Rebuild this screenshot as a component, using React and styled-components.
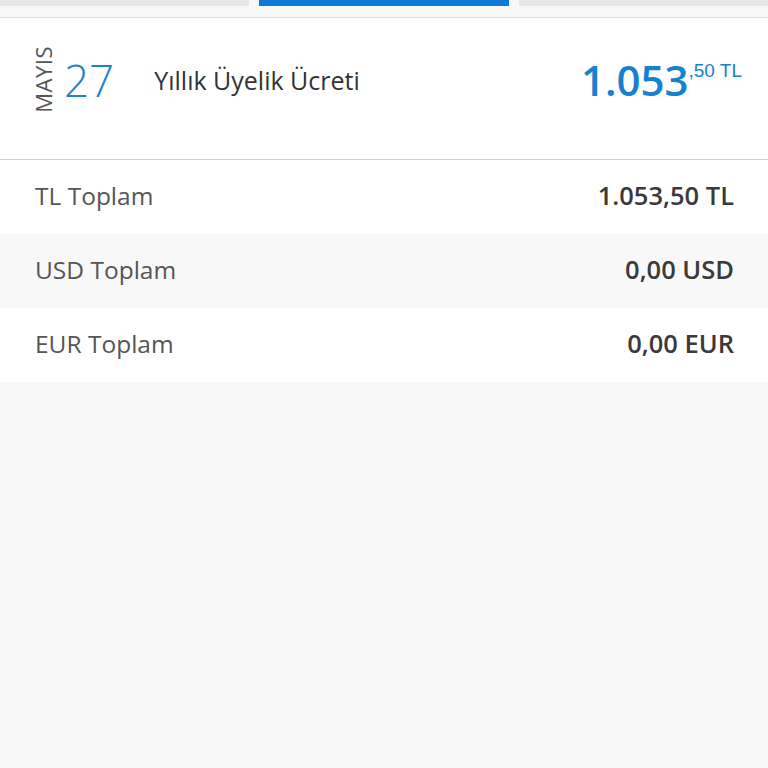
import React from "react";
import styled, { createGlobalStyle } from "styled-components";

const GlobalStyle = createGlobalStyle`
  html, body {
    margin: 0;
    padding: 0;
    background: #f8f8f8;
    font-family: "Open Sans", "Noto Sans", sans-serif;
  }
`;

const totals = [
  { label: "TL Toplam", value: "1.053,50 TL" },
  { label: "USD Toplam", value: "0,00 USD" },
  { label: "EUR Toplam", value: "0,00 EUR" },
];

export default function App() {
  return (
    <Page>
      <GlobalStyle />
      <Tabs>
        <TabBar />
        <TabBar active />
        <TabBar />
      </Tabs>
      <Entry>
        <DateBox>
          <Month>MAYIS</Month>
          <Day>27</Day>
        </DateBox>
        <Title>Yıllık Üyelik Ücreti</Title>
        <Amount>
          <Whole>1.053</Whole>
          <Fraction>,50 TL</Fraction>
        </Amount>
      </Entry>
      <TotalList>
        {totals.map((t, i) => (
          <TotalRow key={t.label} striped={i % 2 === 1}>
            <TotalLabel>{t.label}</TotalLabel>
            <TotalValue>{t.value}</TotalValue>
          </TotalRow>
        ))}
      </TotalList>
    </Page>
  );
}

const Page = styled.div`
  min-height: 768px;
  background: #f8f8f8;
`;

const Tabs = styled.div`
  display: flex;
  gap: 10px;
  height: 17px;
  border-bottom: 1px solid #dcdcdc;
  margin: 0 -1px;
`;

const TabBar = styled.div`
  flex: 1;
  height: 6px;
  background: ${({ active }) => (active ? "#0a7bd8" : "#e8e8e8")};
`;

const Entry = styled.div`
  display: flex;
  align-items: center;
  box-sizing: border-box;
  height: 142px;
  padding: 0 26px 18px 31px;
  background: #fff;
  border-bottom: 1px solid #cfcfcf;
`;

const DateBox = styled.div`
  display: flex;
  align-items: flex-end;
`;

const Month = styled.div`
  writing-mode: vertical-rl;
  transform: rotate(180deg);
  font-size: 22px;
  line-height: 24px;
  color: #555;
  letter-spacing: 0.5px;
`;

const Day = styled.div`
  font-size: 44px;
  font-weight: 300;
  line-height: 44px;
  color: #1f82cc;
  margin-left: 9px;
  margin-bottom: 11px;
`;

const Title = styled.div`
  margin-left: 40px;
  font-size: 25px;
  color: #333;
  flex: 1;
`;

const Amount = styled.div`
  display: flex;
  align-items: flex-start;
  color: #1581d0;
`;

const Whole = styled.span`
  font-size: 42px;
  font-weight: 600;
  line-height: 46px;
`;

const Fraction = styled.span`
  font-family: "Liberation Sans", Arial, sans-serif;
  font-size: 19px;
  line-height: 24px;
  margin-top: 2px;
`;

const TotalList = styled.div``;

const TotalRow = styled.div`
  display: flex;
  align-items: center;
  justify-content: space-between;
  height: 74px;
  padding: 0 34px 4px 35px;
  box-sizing: border-box;
  background: ${({ striped }) => (striped ? "#f8f8f8" : "#fff")};
`;

const TotalLabel = styled.span`
  font-size: 24.5px;
  color: #555;
`;

const TotalValue = styled.span`
  font-size: 25.5px;
  font-weight: 600;
  color: #3a3a3a;
`;
